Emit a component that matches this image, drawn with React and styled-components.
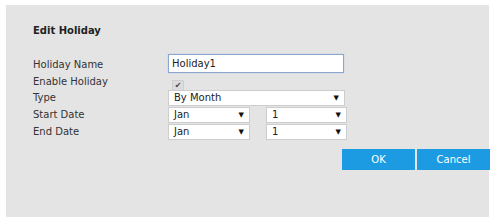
import React from 'react'
import styled, { createGlobalStyle } from 'styled-components'

const GlobalStyle = createGlobalStyle`
  html, body {
    margin: 0;
    padding: 0;
    background: #ffffff;
    font-family: "DejaVu Sans", Verdana, sans-serif;
  }
`

const Page = styled.div`
  padding: 5px 4px 0 6px;
  height: 217px;
  box-sizing: border-box;
  overflow: hidden;
`

const Panel = styled.div`
  background: #e4e4e4;
  height: 230px;
  padding: 19px 0 0 27px;
  box-sizing: border-box;
`

const Title = styled.h2`
  margin: 0 0 17px;
  font-size: 10px;
  font-weight: bold;
  color: #222;
  line-height: 13px;
`

const Form = styled.div`
  display: grid;
  grid-template-columns: 135px 1fr;
  grid-template-rows: 21px 14px 17px 17px 17px;
  align-items: center;
`

const Label = styled.div`
  font-size: 10px;
  color: #333;
  line-height: 12px;
`

const TextInput = styled.input`
  width: 176px;
  height: 19px;
  box-sizing: border-box;
  border: 1px solid #88a6cf;
  box-shadow: 0 0 1px #a9c4e8;
  background: #fff;
  padding: 0 3px;
  font: 10px "DejaVu Sans", sans-serif;
  color: #222;
  outline: none;
  align-self: start;
`

const Check = styled.span`
  display: inline-flex;
  align-items: center;
  justify-content: center;
  width: 10px;
  height: 10px;
  margin-left: 4px;
  background: #dcdcdc;
  border: 1px solid #cfcfcf;
  font-size: 8px;
  color: #444;
  line-height: 1;
`

const Pair = styled.div`
  display: flex;
  gap: 16px;
`

const Select = styled.div`
  display: flex;
  align-items: center;
  justify-content: space-between;
  width: ${p => p.$w}px;
  height: 16px;
  box-sizing: border-box;
  border: 1px solid #cdcdcd;
  background: #fff;
  padding: 0 5px;
  font-size: 10px;
  color: #222;
`

const Arrow = styled.span`
  font-size: 7px;
  color: #111;
`

const Actions = styled.div`
  display: flex;
  justify-content: flex-end;
  gap: 2px;
  margin: 9px -1px 0 0;
`

const Button = styled.button`
  width: 73px;
  height: 21px;
  border: none;
  background: #1d9be2;
  color: #fff;
  font: 10px "DejaVu Sans", sans-serif;
  padding: 0;
`

const Dropdown = ({ value, width }) => (
  <Select $w={width}>
    <span>{value}</span>
    <Arrow>▼</Arrow>
  </Select>
)

const App = () => (
  <>
    <GlobalStyle />
    <Page>
      <Panel>
        <Title>Edit Holiday</Title>
        <Form>
          <Label>Holiday Name</Label>
          <TextInput defaultValue="Holiday1" />
          <Label>Enable Holiday</Label>
          <div>
            <Check>✔</Check>
          </div>
          <Label>Type</Label>
          <Dropdown value="By Month" width={177} />
          <Label>Start Date</Label>
          <Pair>
            <Dropdown value="Jan" width={82} />
            <Dropdown value="1" width={81} />
          </Pair>
          <Label>End Date</Label>
          <Pair>
            <Dropdown value="Jan" width={82} />
            <Dropdown value="1" width={81} />
          </Pair>
        </Form>
        <Actions>
          <Button>OK</Button>
          <Button>Cancel</Button>
        </Actions>
      </Panel>
    </Page>
  </>
)

export default App
